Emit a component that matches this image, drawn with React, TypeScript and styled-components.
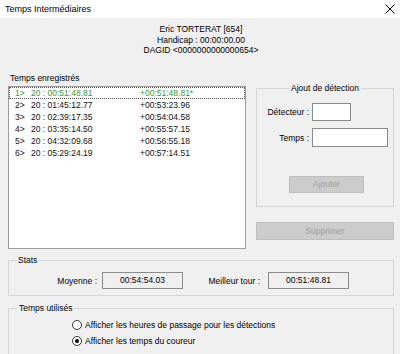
import React from 'react';
import styled, { createGlobalStyle } from 'styled-components';

const Global = createGlobalStyle`
  html, body { margin: 0; padding: 0; background: #f0f0f0; }
  body {
    font-family: "Liberation Sans", Arial, sans-serif;
    font-size: 8.5px;
    color: #111;
  }
  * { box-sizing: border-box; }
`;

const Window = styled.div`
  width: 400px;
  height: 354px;
  overflow: hidden;
  background: #f0f0f0;
  display: flex;
  flex-direction: column;
`;

const TitleBar = styled.div`
  flex: none;
  height: 18px;
  background: #fff;
  display: flex;
  align-items: center;
  justify-content: space-between;
  padding: 0 5px 0 5px;
  font-size: 9px;
  color: #000;
`;

const Header = styled.div`
  padding: 6px 0 0 2px;
  text-align: center;
  line-height: 10.5px;
  color: #000;
`;

const Main = styled.div`
  display: flex;
  gap: 10px;
  margin: 17.5px 6px 0 8px;
  align-items: flex-start;
`;

const LeftCol = styled.div`
  width: 238px;
  display: flex;
  flex-direction: column;
`;

const SectionLabel = styled.div`
  line-height: 10px;
  height: 10px;
  padding-left: 2px;
  margin-bottom: 3px;
  color: #000;
`;

const ListBox = styled.div`
  height: 163px;
  background: #fff;
  border: 1px solid #9c9c9c;
`;

const Row = styled.div<{ $active?: boolean }>`
  height: 12px;
  line-height: 12px;
  display: grid;
  grid-template-columns: 16px 109px 1fr;
  padding-left: 6px;
  white-space: pre;
  color: ${p => (p.$active ? '#3a983a' : '#111')};
  outline: ${p => (p.$active ? '1px dotted #555' : 'none')};
  outline-offset: -1px;
`;

const RightCol = styled.div`
  width: 138px;
  margin-top: 10px;
  display: flex;
  flex-direction: column;
`;

const Group = styled.fieldset`
  margin: 0;
  padding: 0;
  border: 1px solid #d6d6d6;
  min-width: 0;
`;

const Legend = styled.legend<{ $center?: boolean; $offset?: number }>`
  padding: 0 2px;
  line-height: 10px;
  color: #000;
  margin-left: ${p => (p.$center ? 'auto' : `${p.$offset ?? 7}px`)};
  margin-right: ${p => (p.$center ? 'auto' : '0')};
`;

const DetectionGroup = styled(Group)`
  height: 124px;
  display: flex;
  flex-direction: column;
`;

const FormGrid = styled.div`
  display: grid;
  grid-template-columns: 52px auto;
  column-gap: 3px;
  row-gap: 7px;
  align-items: center;
  padding-top: 10px;
`;

const FieldLabel = styled.label`
  text-align: right;
  color: #000;
`;

const TextBox = styled.div<{ $w: number; $h: number }>`
  width: ${p => p.$w}px;
  height: ${p => p.$h}px;
  background: #fff;
  border: 1px solid #8a8a8a;
`;

const DisabledButton = styled.button<{ $w: number }>`
  width: ${p => p.$w}px;
  height: 17px;
  padding: 0;
  background: #cccccc;
  border: 1px solid #bfbfbf;
  color: #a0a0a0;
  font: inherit;
  line-height: 15px;
  text-align: center;
`;

const AddButton = styled(DisabledButton)`
  margin: 29px 0 0 32px;
`;

const DeleteButton = styled(DisabledButton)`
  margin-top: 15px;
  height: 18px;
`;

const WideGroup = styled(Group)<{ $gap: number }>`
  margin: ${p => p.$gap}px 6px 0 8px;
`;

const StatsGrid = styled.div`
  display: grid;
  grid-template-columns: 90px 81px 79px 81px;
  column-gap: 3px;
  align-items: center;
  padding: 7px 0 6px 0;
`;

const StatLabel = styled.span<{ $pr: number }>`
  text-align: right;
  padding-right: ${p => p.$pr}px;
  color: #000;
`;

const ValueBox = styled.div`
  height: 17px;
  line-height: 15px;
  border: 1px solid #8c8c8c;
  text-align: center;
  color: #000;
`;

const RadioList = styled.div`
  display: flex;
  flex-direction: column;
  gap: 2px;
  padding: 5px 0 10px 63px;
`;

const RadioRow = styled.label`
  display: flex;
  align-items: center;
  height: 14px;
  gap: 3px;
  color: #000;
`;

const RadioCircle = styled.span<{ $checked?: boolean }>`
  width: 10px;
  height: 10px;
  border-radius: 50%;
  border: 1px solid #333;
  background: #fff;
  display: flex;
  align-items: center;
  justify-content: center;
  &::after {
    content: '';
    width: 4px;
    height: 4px;
    border-radius: 50%;
    background: ${p => (p.$checked ? '#000' : 'transparent')};
  }
`;

const rows = [
  ['1>', '20 : 00:51:48.81', '+00:51:48.81*'],
  ['2>', '20 : 01:45:12.77', '+00:53:23.96'],
  ['3>', '20 : 02:39:17.35', '+00:54:04.58'],
  ['4>', '20 : 03:35:14.50', '+00:55:57.15'],
  ['5>', '20 : 04:32:09.68', '+00:56:55.18'],
  ['6>', '20 : 05:29:24.19', '+00:57:14.51'],
];

export default function App() {
  return (
    <>
      <Global />
      <Window>
        <TitleBar>
          <span>Temps Intermédiaires</span>
          <svg width="10" height="10" viewBox="0 0 10 10">
            <path d="M0.5 0.5 L9.5 9.5 M9.5 0.5 L0.5 9.5" stroke="#000" strokeWidth="1" fill="none" />
          </svg>
        </TitleBar>
        <Header>
          <div>Eric TORTERAT [654]</div>
          <div>Handicap : 00:00:00.00</div>
          <div>DAGID &lt;0000000000000654&gt;</div>
        </Header>
        <Main>
          <LeftCol>
            <SectionLabel>Temps enregistrés</SectionLabel>
            <ListBox>
              {rows.map((r, i) => (
                <Row key={i} $active={i === 0}>
                  <span>{r[0]}</span>
                  <span>{r[1]}</span>
                  <span>{r[2]}</span>
                </Row>
              ))}
            </ListBox>
          </LeftCol>
          <RightCol>
            <DetectionGroup>
              <Legend $center>Ajout de détection</Legend>
              <FormGrid>
                <FieldLabel>Détecteur :</FieldLabel>
                <TextBox $w={39} $h={18} />
                <FieldLabel>Temps :</FieldLabel>
                <TextBox $w={76} $h={19} />
              </FormGrid>
              <AddButton $w={75} disabled>Ajouter</AddButton>
            </DetectionGroup>
            <DeleteButton $w={138} disabled>Supprimer</DeleteButton>
          </RightCol>
        </Main>
        <WideGroup $gap={6}>
          <Legend $offset={7}>Stats</Legend>
          <StatsGrid>
            <StatLabel $pr={2}>Moyenne :</StatLabel>
            <ValueBox>00:54:54.03</ValueBox>
            <StatLabel $pr={5}>Meilleur tour :</StatLabel>
            <ValueBox>00:51:48.81</ValueBox>
          </StatsGrid>
        </WideGroup>
        <WideGroup $gap={7}>
          <Legend $offset={8}>Temps utilisés</Legend>
          <RadioList>
            <RadioRow>
              <RadioCircle />
              <span>Afficher les heures de passage pour les détections</span>
            </RadioRow>
            <RadioRow>
              <RadioCircle $checked />
              <span>Afficher les temps du coureur</span>
            </RadioRow>
          </RadioList>
        </WideGroup>
      </Window>
    </>
  );
}
